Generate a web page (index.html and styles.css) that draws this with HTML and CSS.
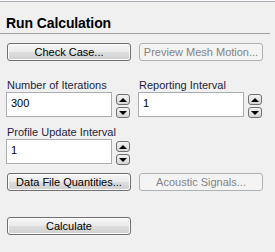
FILE: index.html
```html
<!DOCTYPE html>
<html lang="en">
<head>
    <meta charset="UTF-8">
    <title>Run Calculation</title>
    <link rel="stylesheet" href="styles.css">
</head>
<body>
    <div class="panel">
        <header class="panel-head">
            <h2>Run Calculation</h2>
        </header>

        <div class="row row-buttons">
            <button class="btn">Check Case...</button>
            <button class="btn" disabled>Preview Mesh Motion...</button>
        </div>

        <div class="row row-fields">
            <div class="field">
                <label>Number of Iterations</label>
                <div class="spin-box">
                    <input type="text" value="300">
                    <div class="spinner">
                        <span class="spin up"></span>
                        <span class="spin down"></span>
                    </div>
                </div>
            </div>
            <div class="field">
                <label>Reporting Interval</label>
                <div class="spin-box">
                    <input type="text" value="1">
                    <div class="spinner">
                        <span class="spin up"></span>
                        <span class="spin down"></span>
                    </div>
                </div>
            </div>
        </div>

        <div class="row row-fields row-second">
            <div class="field">
                <label>Profile Update Interval</label>
                <div class="spin-box">
                    <input type="text" value="1">
                    <div class="spinner">
                        <span class="spin up"></span>
                        <span class="spin down"></span>
                    </div>
                </div>
            </div>
        </div>

        <div class="row row-data">
            <button class="btn">Data File Quantities...</button>
            <button class="btn" disabled>Acoustic Signals...</button>
        </div>

        <div class="row row-calc">
            <button class="btn">Calculate</button>
        </div>
    </div>
</body>
</html>
```

FILE: styles.css
```css
/* Reset */
* {
    box-sizing: border-box;
    margin: 0;
    padding: 0;
}

body {
    font-family: 'Liberation Sans', Arial, sans-serif;
    background-color: #f0f0f0;
    color: #1e1e3c;
    width: 275px;
    height: 252px;
    overflow: hidden;
}

.panel {
    border-top: 1px solid #fbfbfb;
    box-shadow: inset 0 1px 0 #a8a8b0;
    height: 100%;
}

/* Header */
.panel-head {
    width: 270px;
    height: 33px;
    padding: 14px 0 0 6px;
    border-bottom: 1px solid #a0a0a0;
}

.panel-head h2 {
    font-size: 14px;
    font-weight: bold;
    letter-spacing: -0.1px;
    color: #000;
    line-height: 16px;
}

/* Rows */
.row {
    display: grid;
    grid-template-columns: 124px 124px;
    column-gap: 8px;
    padding-left: 7px;
}

.row-buttons {
    margin-top: 9px;
}

.row-fields {
    margin-top: 18px;
}

.row-second {
    margin-top: 8px;
}

.row-data {
    margin-top: 8px;
}

.row-calc {
    margin-top: 26px;
}

/* Buttons */
.btn {
    height: 18px;
    font-family: inherit;
    font-size: 11px;
    white-space: nowrap;
    color: #000;
    border: 1px solid #707070;
    border-radius: 3px;
    background: linear-gradient(#f6f6f6 0%, #ebebeb 48%, #dddddd 52%, #d0d0d0 100%);
    box-shadow: inset 0 0 0 1px #fcfcfc;
}

.btn:disabled {
    color: #838383;
    border-color: #adb2b5;
    background: #f4f4f4;
    box-shadow: none;
}

/* Fields */
.field label {
    display: block;
    font-size: 11px;
    line-height: 13px;
    height: 13px;
}

.spin-box {
    display: flex;
    gap: 4px;
}

.spin-box input {
    width: 106px;
    height: 25px;
    margin-left: -1px;
    border: 1px solid #abadb3;
    background: #fff;
    font-family: inherit;
    font-size: 11px;
    color: #000;
    padding: 0 4px 3px;
    outline: none;
}

.spinner {
    display: flex;
    flex-direction: column;
    gap: 2px;
    padding-top: 2px;
}

.spin {
    position: relative;
    width: 14px;
    height: 11px;
    border: 1px solid #707070;
    border-radius: 3px;
    background: linear-gradient(#f2f2f2, #d6d6d6);
}

.spin::after {
    content: '';
    position: absolute;
    left: 2px;
    top: 3px;
    border-left: 4px solid transparent;
    border-right: 4px solid transparent;
}

.spin.up::after {
    border-bottom: 4px solid #000;
}

.spin.down::after {
    border-top: 4px solid #000;
}
```
